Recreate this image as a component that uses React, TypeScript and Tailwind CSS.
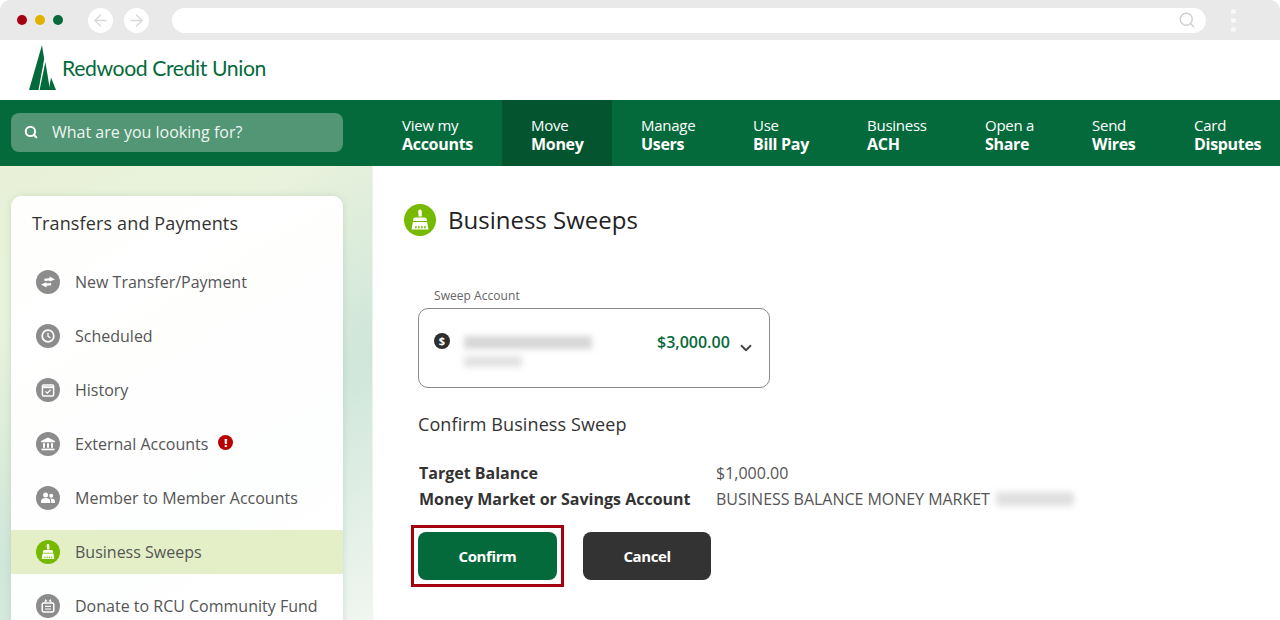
import React from 'react';
import { ArrowLeft, ArrowRight, ChevronDown, Search } from 'lucide-react';

const navItems = [
  { top: 'View my', bottom: 'Accounts', width: 'w-[130px]', pad: 'pl-[30px]' },
  { top: 'Move', bottom: 'Money', width: 'w-[110px]', pad: 'pl-[29px]', active: true },
  { top: 'Manage', bottom: 'Users', width: 'w-[112px]', pad: 'pl-[29px]' },
  { top: 'Use', bottom: 'Bill Pay', width: 'w-[114px]', pad: 'pl-[29px]' },
  { top: 'Business', bottom: 'ACH', width: 'w-[118px]', pad: 'pl-[29px]' },
  { top: 'Open a', bottom: 'Share', width: 'w-[107px]', pad: 'pl-[29px]' },
  { top: 'Send', bottom: 'Wires', width: 'w-[101px]', pad: 'pl-[29px]' },
  { top: 'Card', bottom: 'Disputes', width: 'w-[99px]', pad: 'pl-[30px]' },
];

const BroomIcon = ({ size }: { size: number }) => (
  <svg width={size} height={size} viewBox="0 0 24 24" fill="white">
    <path d="M10.2 3.2a1.8 1.8 0 0 1 3.6 0V8.6h-3.2z" />
    <path d="M7.4 9.4h9.2a2.2 2.2 0 0 1 2.2 2.2v1.4H5.2v-1.4a2.2 2.2 0 0 1 2.2-2.2z" />
    <path fillRule="evenodd" d="M4.8 14h14.4l1.3 7.4h-17zM7.2 18v2.4h1.4V18zm3 0v2.4h1.4V18zm3 0v2.4h1.4V18zm3 0v2.4h1.4V18z" />
  </svg>
);

const TransferIcon = () => (
  <svg width="16" height="16" viewBox="0 0 16 16" fill="white">
    <path d="M9.5 2.6 15 5.4 9.5 7.6V6.4L4.6 7 4.2 4.8 9.5 4.2z" />
    <path d="M6.5 8.2 1 10.6 6.5 13.4v-1.6l4.9-.6-.4-2.2-4.5.6z" />
  </svg>
);

const ClockIcon = () => (
  <svg width="16" height="16" viewBox="0 0 16 16" fill="none" stroke="white">
    <circle cx="8" cy="8" r="5.8" strokeWidth="1.8" />
    <path d="M8 4.8V8.3L10.4 9.8" strokeWidth="1.3" />
  </svg>
);

const HistoryIcon = () => (
  <svg width="16" height="16" viewBox="0 0 16 16" fill="none" stroke="white">
    <rect x="2.4" y="3" width="11.2" height="11" rx="1.2" strokeWidth="1.5" />
    <path d="M2.4 5.2h11.2" strokeWidth="2" />
    <path d="M5.4 9.4 7.3 11.2 10.6 7.8" strokeWidth="1.3" />
  </svg>
);

const BankIcon = () => (
  <svg width="16" height="16" viewBox="0 0 16 16" fill="white">
    <path d="M8 1.5 15 5v1.2H1V5z" />
    <path d="M3 7.2h2v4.6H3zM7 7.2h2v4.6H7zM11 7.2h2v4.6h-2z" />
    <path d="M1.5 12.6h13v1.7h-13z" />
  </svg>
);

const MembersIcon = () => (
  <svg width="16" height="16" viewBox="0 0 16 16" fill="white">
    <circle cx="5.6" cy="5" r="2.5" />
    <circle cx="11.2" cy="5.8" r="2" />
    <path d="M1 13v-1.8c0-2 2-3.2 4.6-3.2s4.6 1.2 4.6 3.2V13z" />
    <path d="M11.2 13v-2c0-1-.4-1.8-1-2.4.4-.1.8-.1 1.2-.1 2 0 3.6 1 3.6 2.7V13z" />
  </svg>
);

const DonateIcon = () => (
  <svg width="16" height="16" viewBox="0 0 16 16" fill="none" stroke="white">
    <rect x="2.2" y="5" width="11.6" height="9" rx="1.4" strokeWidth="1.5" />
    <path d="M5 8.4h6M5 11h6" strokeWidth="1.2" />
    <path d="M5 4.2 5.6 2 7 3.4M11 4.2 10.4 2 9 3.4" strokeWidth="1.1" />
  </svg>
);

const menu = [
  { label: 'New Transfer/Payment', icon: <TransferIcon /> },
  { label: 'Scheduled', icon: <ClockIcon /> },
  { label: 'History', icon: <HistoryIcon /> },
  { label: 'External Accounts', icon: <BankIcon />, alert: true },
  { label: 'Member to Member Accounts', icon: <MembersIcon /> },
  { label: 'Business Sweeps', icon: <BroomIcon size={18} />, active: true },
  { label: 'Donate to RCU Community Fund', icon: <DonateIcon /> },
];

export default function App() {
  return (
    <div className="w-[1280px] h-[620px] overflow-hidden bg-white font-['Open_Sans',sans-serif] flex flex-col">
      {/* Browser chrome */}
      <div className="h-10 shrink-0 bg-[#e9e9e9] rounded-t-[10px] flex items-center">
        <div className="flex items-center gap-[8px] pl-[17px]">
          <span className="w-[10px] h-[10px] rounded-full bg-[#a50010]" />
          <span className="w-[10px] h-[10px] rounded-full bg-[#e2b100]" />
          <span className="w-[10px] h-[10px] rounded-full bg-[#0a6b3a]" />
        </div>
        <div className="flex items-center gap-[11px] ml-[25px]">
          <span className="w-[25px] h-[25px] rounded-full bg-white flex items-center justify-center">
            <ArrowLeft size={19} strokeWidth={1.6} className="text-[#d8d8d8]" />
          </span>
          <span className="w-[25px] h-[25px] rounded-full bg-white flex items-center justify-center">
            <ArrowRight size={19} strokeWidth={1.6} className="text-[#d8d8d8]" />
          </span>
        </div>
        <div className="w-[1034px] h-[25px] ml-[23px] rounded-full bg-white flex items-center justify-end pr-[10px]">
          <Search size={18} strokeWidth={1.8} className="text-[#cfcfcf]" />
        </div>
        <div className="flex flex-col gap-[4px] ml-[25px]">
          <span className="w-[5px] h-[5px] rounded-full bg-[#f8f8f8]" />
          <span className="w-[5px] h-[5px] rounded-full bg-[#f8f8f8]" />
          <span className="w-[5px] h-[5px] rounded-full bg-[#f8f8f8]" />
        </div>
      </div>

      {/* Logo bar */}
      <div className="h-[60px] shrink-0 bg-white flex items-center pl-[29px]">
        <svg width="27" height="46" viewBox="0 0 27 46" fill="#056a3b" className="mt-[-5px]">
          <path d="M13 0 15.2 14 9.5 45H0z" />
          <path d="M16.4 17 21 45H10.6z" />
          <path d="M22 32.5 27 45H19.8z" />
        </svg>
        <span className="ml-[6px] mt-[-2px] text-[21.2px] tracking-[-0.4px] leading-none text-[#056a3b] font-['Lato',sans-serif]">
          Redwood Credit Union
        </span>
      </div>

      {/* Main nav */}
      <div className="h-[66px] shrink-0 bg-[#056a3b] flex items-center text-white">
        <div className="w-[372px] shrink-0 pl-[11px]">
          <div className="w-[332px] h-[39px] mt-[-2px] rounded-[8px] bg-[#529675] flex items-center pl-[13px]">
            <Search size={14} strokeWidth={3.5} />
            <span className="ml-[14px] text-[16px] font-medium text-[#eef5f1]">What are you looking for?</span>
          </div>
        </div>
        <div className="flex h-full">
          {navItems.map((item) => (
            <div
              key={item.bottom}
              className={`${item.width} ${item.pad} h-full flex flex-col justify-center pt-[4px] ${item.active ? 'bg-[#04552f]' : ''}`}
            >
              <span className="text-[15px] leading-[19px] tracking-[-0.25px]">{item.top}</span>
              <span className="text-[16px] leading-[19px] font-bold tracking-[-0.3px]">{item.bottom}</span>
            </div>
          ))}
        </div>
      </div>

      <div className="flex-1 flex min-h-0">
        {/* Sidebar */}
        <div className="w-[373px] shrink-0 pl-[11px] pt-[30px] border-r border-[#eef1ee] bg-[linear-gradient(150deg,#e8f1d6_0%,#e9f2dc_25%,#cfe6da_60%,#f0f6f0_100%)]">
          <div className="w-[332px] h-[500px] bg-white/95 rounded-[10px] shadow-[0_0_6px_rgba(120,160,130,0.25)]">
            <div className="h-[56px] pl-[21px] pt-[13px] text-[18px] leading-[28px] font-medium tracking-[0.14px] text-[#333]">
              Transfers and Payments
            </div>
            <div className="flex flex-col gap-[10px] pt-[8px]">
              {menu.map((m) => (
                <div key={m.label} className={`h-[44px] flex items-center pl-[25px] ${m.active ? 'bg-[#e4efc8]' : ''}`}>
                  <span className={`w-[24px] h-[24px] rounded-full flex items-center justify-center ${m.active ? 'bg-[#76b900]' : 'bg-[#8c8c8c]'}`}>
                    {m.icon}
                  </span>
                  <span className="ml-[15px] text-[16px] text-[#555]">{m.label}</span>
                  {m.alert && (
                    <span className="ml-[10px] mt-[-3px] w-[15px] h-[15px] rounded-full bg-[#b80000] text-white text-[11px] font-extrabold leading-[15px] text-center">
                      !
                    </span>
                  )}
                </div>
              ))}
            </div>
          </div>
        </div>

        {/* Content */}
        <div className="flex-1 pl-[31px] pt-[38px]">
          <div className="flex items-center h-[32px]">
            <span className="w-[32px] h-[32px] rounded-full bg-[#76b900] flex items-center justify-center">
              <BroomIcon size={24} />
            </span>
            <h1 className="ml-[12px] text-[24px] text-[#222] font-normal">Business Sweeps</h1>
          </div>

          <div className="ml-[14px] mt-[52px]">
            <div className="pl-[16px] text-[12px] leading-[16px] text-[#666] font-medium tracking-[0.05px]">Sweep Account</div>
            <div className="mt-[4px] w-[352px] h-[80px] border border-[#8a8a8a] rounded-[10px] flex pl-[15px] pt-[24px]">
              <span className="w-[16px] h-[16px] rounded-full bg-[#2e2e2e] text-white text-[11px] font-bold leading-[16px] text-center">$</span>
              <div className="ml-[14px] mt-[3px]">
                <div className="w-[128px] h-[13px] bg-[#d6d6d6] blur-[3px]" />
                <div className="mt-[7px] w-[58px] h-[11px] bg-[#e2e2e2] blur-[3px]" />
              </div>
              <span className="ml-[65px] text-[16px] leading-[18px] font-semibold text-[#056a3b]">$3,000.00</span>
              <ChevronDown size={18} strokeWidth={2.4} className="ml-[7px] mt-[6px] text-[#444]" />
            </div>

            <h2 className="mt-[23px] text-[18px] leading-[26px] tracking-[0.1px] text-[#333] font-normal">Confirm Business Sweep</h2>

            <div className="mt-[23px] pl-[1px] text-[16px] leading-[26px] text-[#333]">
              <div className="flex">
                <span className="w-[297px] font-bold">Target Balance</span>
                <span className="text-[#555]">$1,000.00</span>
              </div>
              <div className="flex items-center">
                <span className="w-[297px] font-bold">Money Market or Savings Account</span>
                <span className="text-[#555] tracking-[-0.03px]">BUSINESS BALANCE MONEY MARKET</span>
                <span className="ml-[6px] w-[78px] h-[14px] bg-[#e0e0e0] blur-[3px]" />
              </div>
            </div>

            <div className="mt-[20px] flex items-center gap-[26px]">
              <button className="relative w-[139px] h-[48px] rounded-[8px] bg-[#056a3b] text-white text-[15px] font-bold tracking-[-0.4px]">
                Confirm
                <span className="absolute -inset-[7px] border-[3px] border-[#a50010] pointer-events-none" />
              </button>
              <button className="w-[128px] h-[48px] rounded-[8px] bg-[#333333] text-white text-[15px] font-bold tracking-[-0.4px]">Cancel</button>
            </div>
          </div>
        </div>
      </div>
    </div>
  );
}
